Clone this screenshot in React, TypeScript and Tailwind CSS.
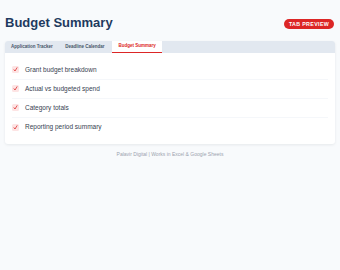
import React from "react";

const items = [
  "Grant budget breakdown",
  "Actual vs budgeted spend",
  "Category totals",
  "Reporting period summary",
];

function Check() {
  return (
    <div className="w-[7px] h-[7px] rounded-[1.5px] bg-[#fde4e4] flex items-center justify-center shrink-0">
      <svg width="5" height="5" viewBox="0 0 10 10" fill="none">
        <path d="M2 5.5 L4 8 L8 1.5" stroke="#dc2626" strokeWidth="1.5" strokeLinecap="round" strokeLinejoin="round" />
      </svg>
    </div>
  );
}

export default function App() {
  return (
    <div
      className="w-[340px] h-[270px] bg-[#f8fafc] px-[5px] pt-[15px]"
      style={{ fontFamily: '"Liberation Sans", Arial, sans-serif' }}
    >
      <div className="flex items-center justify-between h-[16px]">
        <div className="text-[13px] leading-[16px] font-extrabold text-[#1e3a5f]">Budget Summary</div>
        <div className="h-[10px] leading-[10px] w-[50px] mr-[1px] mt-[1px] rounded-full bg-[#dc2626] text-white text-[5.3px] font-bold tracking-[0.35px] text-center">
          TAB PREVIEW
        </div>
      </div>
      <div className="mt-[10px] bg-white rounded-[3px] shadow-[0_1px_3px_rgba(15,23,42,0.08)] overflow-hidden">
        <div className="h-[12px] bg-[#e2e8f0] flex items-stretch text-[4.5px] font-semibold">
          <div className="px-[6px] flex items-center text-[#475569]">Application Tracker</div>
          <div className="px-[6.5px] flex items-center text-[#475569]">Deadline Calendar</div>
          <div className="ml-[1px] w-[50px] flex items-center justify-center bg-white text-[#dc2626] border-b-[1.5px] border-[#dc2626]">
            Budget Summary
          </div>
        </div>
        <div className="px-[7px] pt-[7.5px] pb-[7px]">
          {items.map((t, i) => (
            <div
              key={t}
              className={`h-[19px] flex items-center gap-[6px] ${i < items.length - 1 ? "border-b border-[#f5f7fa]" : ""}`}
            >
              <Check />
              <span className="text-[6.5px] text-[#374151]">{t}</span>
            </div>
          ))}
        </div>
      </div>
      <div className="mt-[7px] text-center text-[5px] leading-[6px] text-[#9ca3af]">
        Palavir Digital | Works in Excel &amp; Google Sheets
      </div>
    </div>
  );
}
